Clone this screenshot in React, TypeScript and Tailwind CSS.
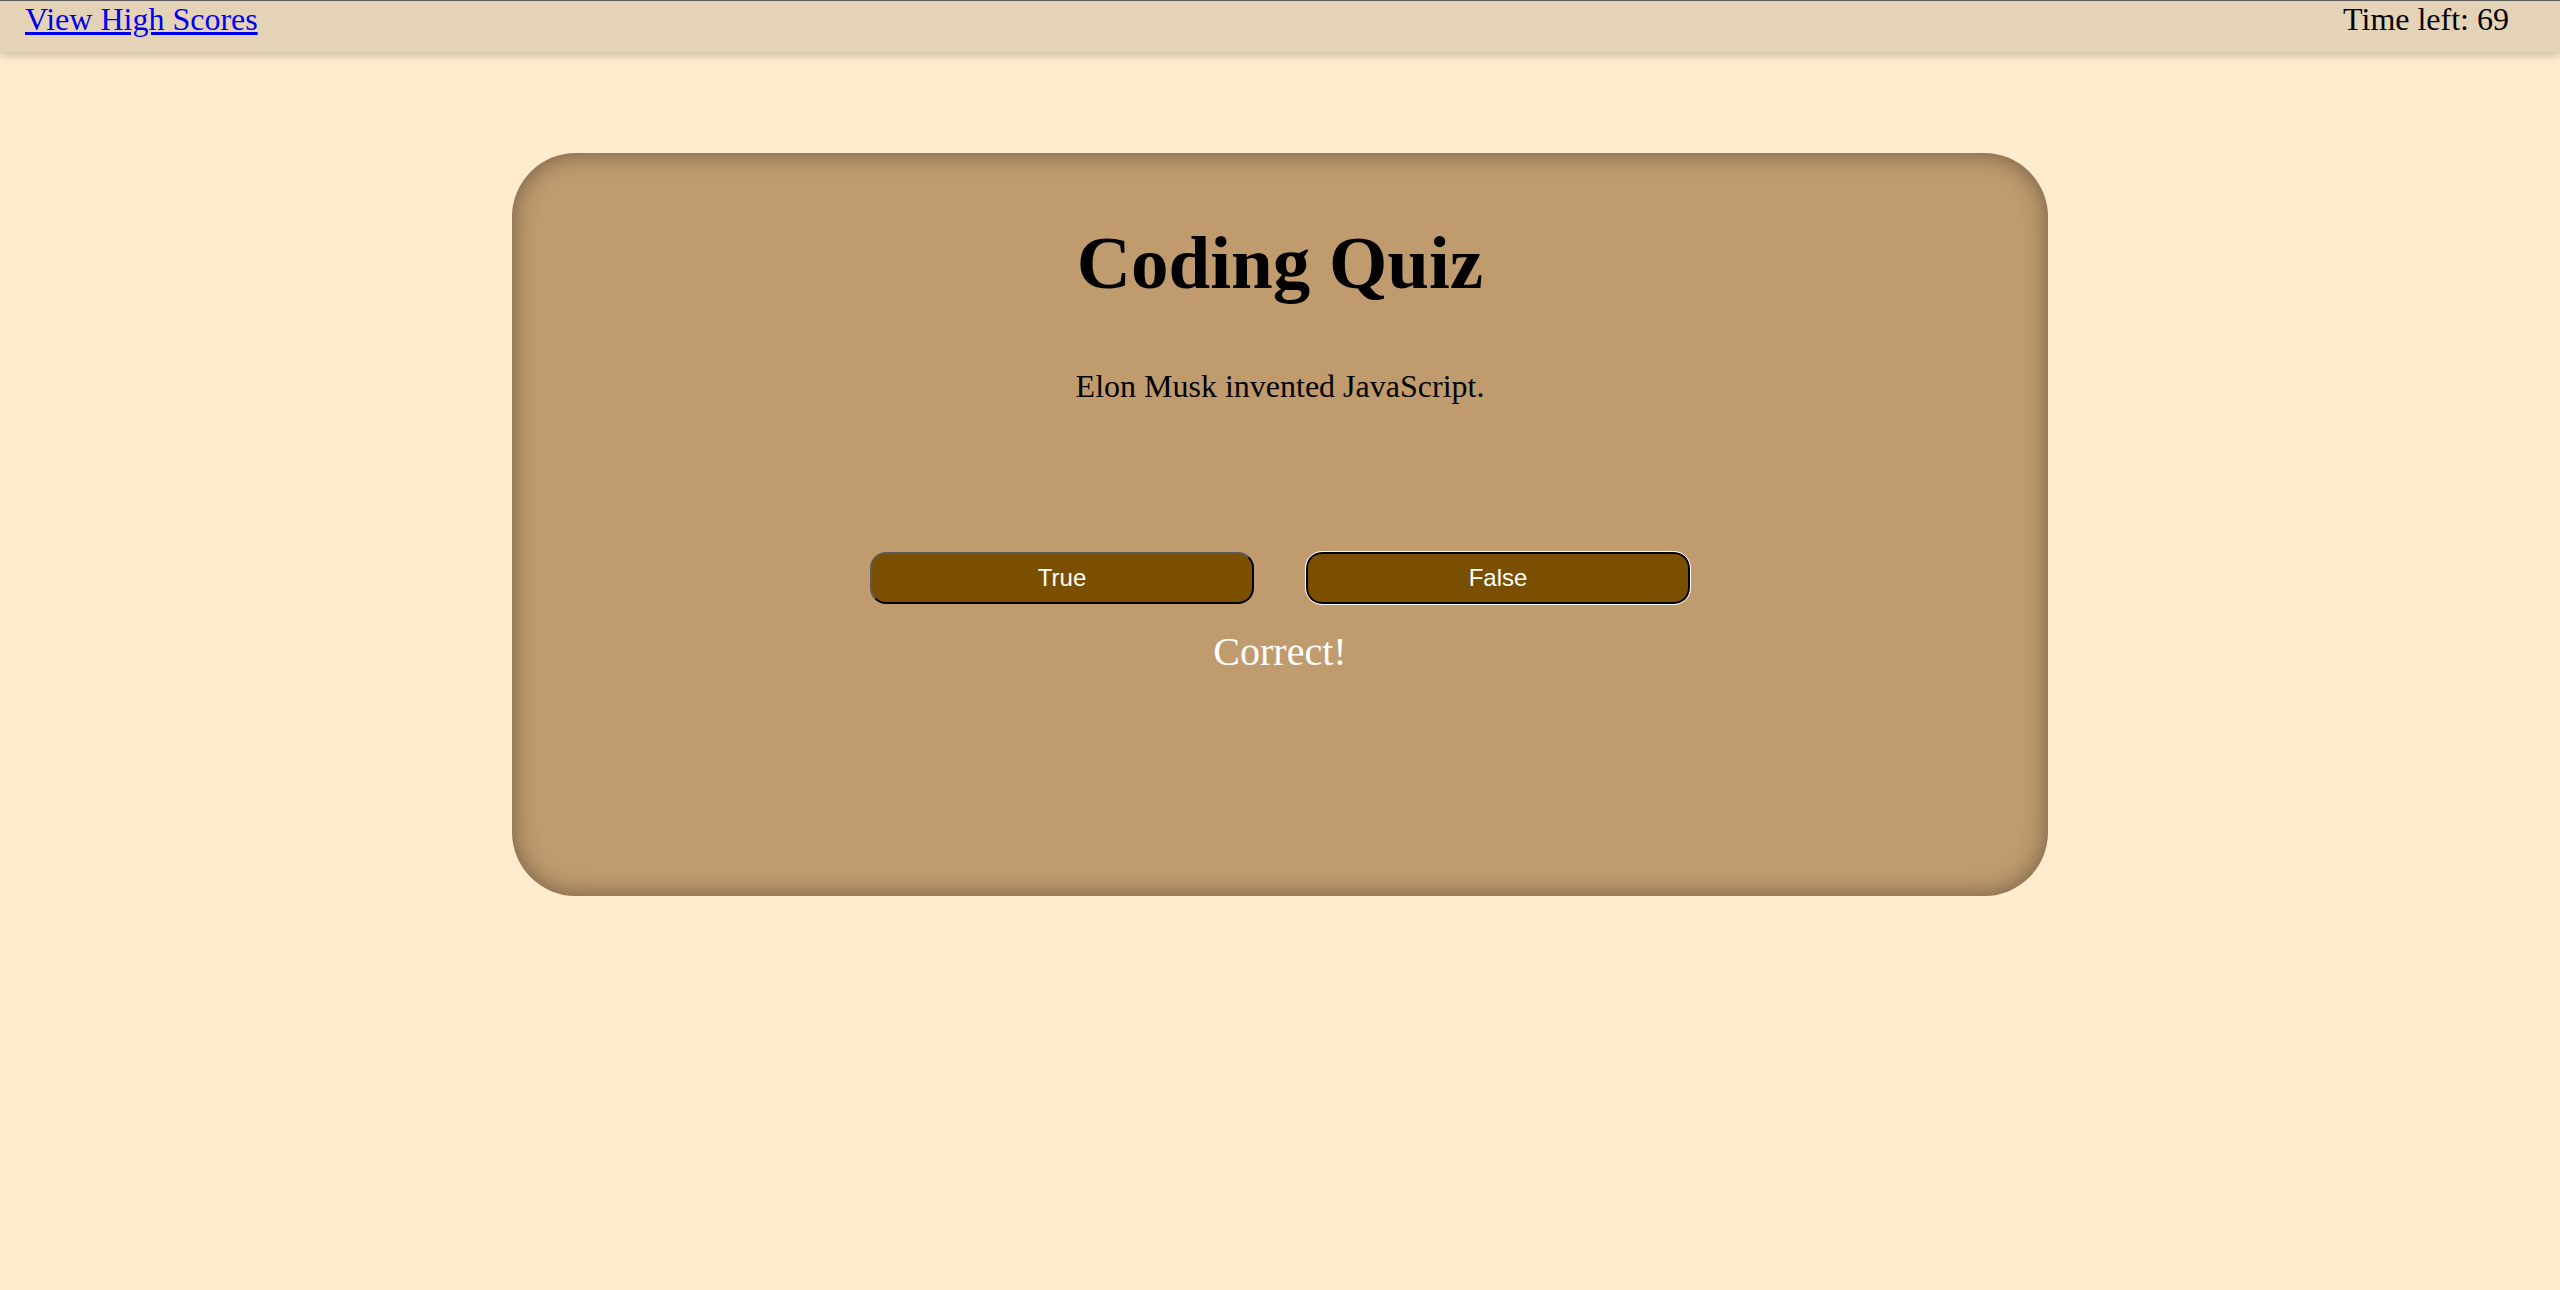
import { useState } from 'react'

const serif = "font-['Liberation_Serif','Times_New_Roman',serif]"

function Header({ timeLeft }: { timeLeft: number }) {
  return (
    <header
      className={`flex h-[52px] items-start justify-between border-t border-[#5f5f5f] bg-[#e4d3b7] pl-[25px] pr-[51px] text-[32px] leading-[normal] shadow-[0_4px_8px_rgba(0,0,0,0.18)] ${serif}`}
    >
      <a href="#" className="text-[#0000ee] underline">
        View High Scores
      </a>
      <span className="text-black">Time left: {timeLeft}</span>
    </header>
  )
}

function AnswerButton({ label, focused }: { label: string; focused?: boolean }) {
  const border = focused
    ? 'border-2 border-black outline outline-1 outline-white'
    : 'border-2 border-t-[#5a5a5a] border-l-[#5a5a5a] border-b-black border-r-black'

  return (
    <button
      className={`h-[52px] w-[384px] rounded-[16px] bg-[#7b4f00] font-['Liberation_Sans',Arial,sans-serif] text-[24px] leading-none text-white ${border}`}
    >
      {label}
    </button>
  )
}

export default function App() {
  const [timeLeft] = useState(69)

  return (
    <div className="min-h-[1290px] bg-[#ffebcd]">
      <Header timeLeft={timeLeft} />

      <main className="pt-[101px]">
        <section
          className={`mx-auto flex h-[743px] w-[1536px] flex-col items-center rounded-[64px] bg-[#bf9b6e] pt-[72px] shadow-[inset_0_0_24px_rgba(0,0,0,0.42)] ${serif}`}
        >
          <h1 className="text-[75px] font-bold leading-none text-black">Coding Quiz</h1>

          <p className="mt-[70px] text-[32px] leading-none text-black">
            Elon Musk invented JavaScript.
          </p>

          <div className="mt-[150px] flex gap-[52px]">
            <AnswerButton label="True" />
            <AnswerButton label="False" focused />
          </div>

          <p className="mt-[28px] text-[40px] leading-none text-white">Correct!</p>
        </section>
      </main>
    </div>
  )
}
